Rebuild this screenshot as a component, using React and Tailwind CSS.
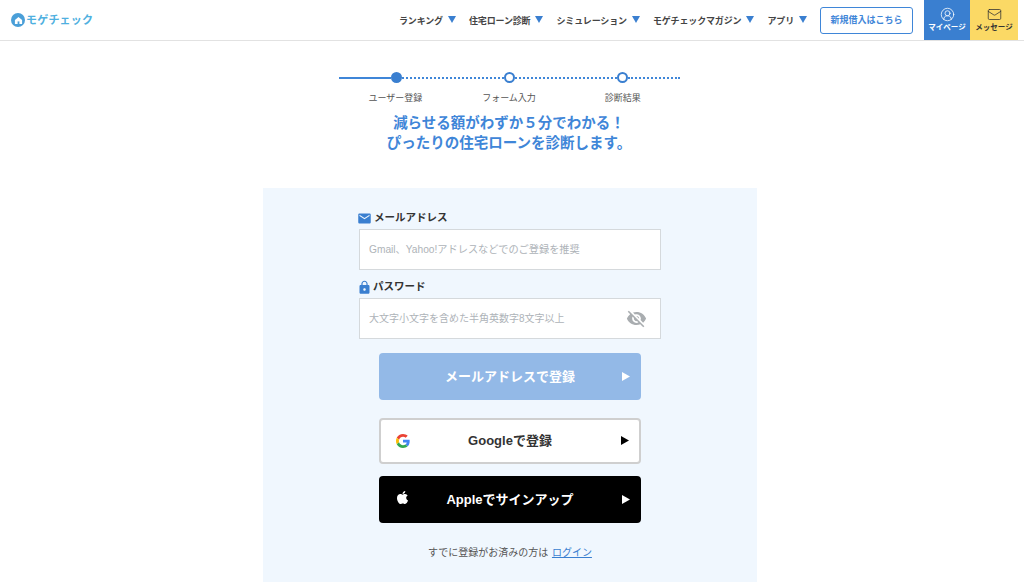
import { FaApple } from "react-icons/fa";
import { MdEmail, MdLock, MdVisibilityOff } from "react-icons/md";
import { CircleUserRound, Mail } from "lucide-react";

const navItems = ["ランキング", "住宅ローン診断", "シミュレーション", "モゲチェックマガジン", "アプリ"];
const steps = ["ユーザー登録", "フォーム入力", "診断結果"];

const Triangle = ({ className }) => (
  <svg viewBox="0 0 8 7" className={className}>
    <path d="M0 0h8L4 7z" fill="currentColor" />
  </svg>
);

const Play = ({ className }) => (
  <svg viewBox="0 0 8 9" className={className}>
    <path d="M0 0l8 4.5L0 9z" fill="currentColor" />
  </svg>
);

const GoogleLogo = () => (
  <svg viewBox="0 0 48 48" className="w-[14px] h-[14px]">
    <path fill="#EA4335" d="M24 9.5c3.5 0 6.7 1.2 9.2 3.600l6.900-6.900C35.900 2.400 30.500 0 24 0 14.600 0 6.500 5.400 2.600 13.200l8 6.200C12.500 13.600 17.800 9.500 24 9.500z" />
    <path fill="#4285F4" d="M46.900 24.500c0-1.600-.1-3.100-.4-4.500H24v9h12.900c-.6 3-2.200 5.500-4.700 7.200l7.700 6c4.500-4.200 7-10.300 7-17.700z" />
    <path fill="#FBBC05" d="M10.600 28.600c-.5-1.400-.8-3-.8-4.600s.3-3.200.8-4.600l-8-6.200C.9 16.500 0 20.100 0 24s.9 7.500 2.600 10.800l8-6.200z" />
    <path fill="#34A853" d="M24 48c6.500 0 11.900-2.100 15.900-5.800l-7.700-6c-2.200 1.500-4.900 2.300-8.200 2.300-6.200 0-11.500-4.200-13.400-9.900l-8 6.200C6.500 42.600 14.600 48 24 48z" />
  </svg>
);

export default function App() {
  return (
    <div className="h-[585px] overflow-hidden bg-white text-[#333] font-['Liberation_Sans','Noto_Sans_CJK_JP',sans-serif]">
      {/* Header */}
      <header className="h-[41px] flex items-center border-b border-[#e2e2e2] pl-[11px] pr-[6px]">
        <div className="flex items-center gap-[1px]">
          <div className="w-[14px] h-[14px] rounded-full bg-[#4a9fd8] flex items-center justify-center">
            <svg viewBox="0 0 10 10" className="w-[9px] h-[9px]">
              <path d="M5 1L1 4.500V9h8V4.500z" fill="white" />
              <path d="M4 6h2v3H4z" fill="#4a9fd8" />
            </svg>
          </div>
          <span className="text-[11px] font-bold text-[#4fb0e0] tracking-[0.2px]">モゲチェック</span>
        </div>
        <nav className="ml-auto mt-[4px] flex items-center gap-[13px]">
          {navItems.map((item) => (
            <div key={item} className="flex items-center gap-[5px]">
              <span className="text-[9px] font-bold text-[#444] tracking-[-0.15px]">{item}</span>
              <Triangle className="mb-[6px] w-[8px] h-[7px] text-[#3a7fd0]" />
            </div>
          ))}
        </nav>
        <button className="ml-[13px] w-[93px] h-[27px] pt-[1px] rounded-[3px] border border-[#3f86d8] text-[9px] font-bold text-[#3f86d8]">
          新規借入はこちら
        </button>
        <div className="ml-[11px] flex h-[40px]">
          <div className="w-[46px] bg-[#3a7fd0] text-white flex flex-col items-center justify-center gap-[1px]">
            <CircleUserRound size={15} strokeWidth={1.250} />
            <span className="text-[7.500px] font-bold leading-[10px]">マイページ</span>
          </div>
          <div className="w-[48px] bg-[#fbd965] text-[#333] flex flex-col items-center justify-center gap-[1px]">
            <Mail size={15} strokeWidth={1.250} />
            <span className="text-[7.500px] font-bold leading-[10px]">メッセージ</span>
          </div>
        </div>
      </header>

      <main className="w-[1020px] flex flex-col items-center">
        {/* Stepper */}
        <div className="mt-[31px] mr-[2px] w-[341px] h-[11px] flex items-center">
          <div className="w-[52px] h-[2px] bg-[#3f86d8]" />
          <div className="w-[11px] h-[11px] rounded-full bg-[#3a7fd0]" />
          <div className="flex-1 border-t-2 border-dotted border-[#3f86d8]" />
          <div className="w-[11px] h-[11px] rounded-full border-2 border-[#3a7fd0] bg-white" />
          <div className="flex-1 border-t-2 border-dotted border-[#3f86d8]" />
          <div className="w-[11px] h-[11px] rounded-full border-2 border-[#3a7fd0] bg-white" />
          <div className="w-[52px] border-t-2 border-dotted border-[#3f86d8]" />
        </div>
        <div className="mt-[8px] mr-[2px] w-[341px] grid grid-cols-3 text-center text-[9px] leading-[14px] text-[#555]">
          {steps.map((step) => (
            <span key={step}>{step}</span>
          ))}
        </div>

        <h1 className="mt-[8px] mr-[2px] text-center text-[14.500px] leading-[20px] font-bold text-[#3f86d8]">
          減らせる額がわずか５分でわかる！
          <br />
          ぴったりの住宅ローンを診断します。
        </h1>

        {/* Form panel */}
        <section className="mt-[35px] w-[494px] h-[394px] bg-[#f0f7fe] flex flex-col items-center pt-[23px]">
          <div className="w-[302px]">
            <label className="flex items-center gap-[2px] h-[14px] text-[10.500px] font-bold text-[#333]">
              <MdEmail className="-ml-[2px] w-[15px] h-[15px] text-[#3a7fd0]" />
              メールアドレス
            </label>
            <input
              placeholder="Gmail、Yahoo!アドレスなどでのご登録を推奨"
              className="mt-[4px] w-full h-[41px] px-[9px] bg-white border border-[#d5d9dc] text-[10.200px] outline-none placeholder:text-[#aeb3b8]"
            />
            <label className="mt-[10px] flex items-center gap-[1px] h-[14px] text-[10.500px] font-bold text-[#333]">
              <MdLock className="-ml-[2px] w-[15px] h-[15px] text-[#3a7fd0]" />
              パスワード
            </label>
            <div className="relative mt-[4px]">
              <input
                placeholder="大文字小文字を含めた半角英数字8文字以上"
                className="w-full h-[41px] px-[9px] bg-white border border-[#d5d9dc] text-[10px] outline-none placeholder:text-[#aeb3b8]"
              />
              <MdVisibilityOff className="absolute right-[14px] top-[10px] w-[21px] h-[21px] text-[#a9adb0]" />
            </div>
          </div>

          <button className="mt-[14px] relative w-[262px] h-[47px] rounded-[4px] bg-[#93b9e7] text-white text-[13px] font-bold">
            メールアドレスで登録
            <Play className="absolute right-[11px] top-[19px] w-[8px] h-[9px]" />
          </button>

          <button className="mt-[18px] relative w-[262px] h-[46px] rounded-[4px] bg-white border-2 border-[#cfcfcf] text-[#333] text-[13px] font-bold">
            Googleで登録
            <span className="absolute left-[15px] top-[14px]">
              <GoogleLogo />
            </span>
            <Play className="absolute right-[10px] top-[16px] w-[8px] h-[9px] text-black" />
          </button>

          <button className="mt-[12px] relative w-[262px] h-[47px] rounded-[4px] bg-black text-white text-[13px] font-bold">
            Appleでサインアップ
            <FaApple className="absolute left-[16px] top-[14px] w-[15px] h-[15px]" />
            <Play className="absolute right-[11px] top-[19px] w-[8px] h-[9px]" />
          </button>

          <p className="mt-[23px] text-[10px] leading-[14px] text-[#555]">
            すでに登録がお済みの方は <a className="ml-[1px] text-[#3a7fd0] underline">ログイン</a>
          </p>
        </section>
      </main>
    </div>
  );
}
